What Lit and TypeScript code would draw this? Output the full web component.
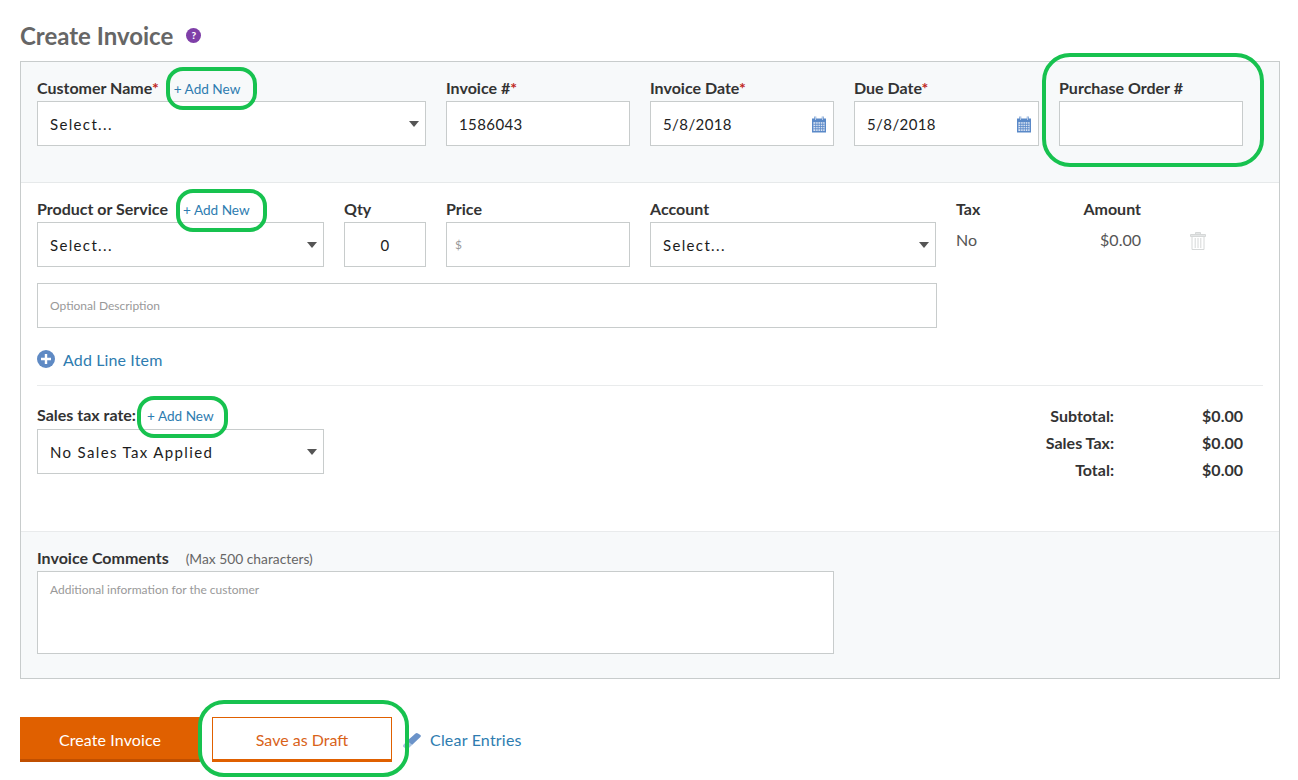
import { customElement } from 'lit/decorators.js';
import { css, html, LitElement, nothing } from 'lit';

const caret = html`<span class="caret"></span>`;

const calendar = html`<svg class="cal" viewBox="0 0 15 18" width="14" height="18">
  <path fill="#5a89c8" d="M0 3h2.5V1h2v2h6V1h2v2H15v15H0z" />
  <path fill="#fff" d="M3.3 .6h.8v4h-.8zM11 .6h.8v4H11z" opacity=".75" />
  <path fill="#dbe5f3" d="M1.5 7h12v9.5h-12z" />
  <path stroke="#5a89c8" stroke-width=".9" d="M1.5 9.3h12M1.5 11.7h12M1.5 14.1h12M4 7v9.5M6.5 7v9.5M9 7v9.5M11.5 7v9.5" />
</svg>`;

const trash = html`<svg viewBox="0 0 16 18" width="16" height="18" fill="none" stroke="#d6d8d8" stroke-width="1">
  <path d="M5.5 2.5v-2h5v2M.5 2.5h15v2H.5z" fill="#e4e6e6" />
  <path d="M2 4.5v13h12v-13M5.2 6v10M8 6v10M10.8 6v10" />
</svg>`;

const eraser = html`<svg viewBox="0 0 20 18" width="20" height="18">
  <path fill="#6b93c9" d="M5 10 13.5 2.5c.8-.7 1.8-.7 2.5 0l2.4 1.6c.6.6.6 1.4 0 2L10 14z" />
  <path fill="#a9c1e0" d="M1 14.2 5 10l5 4-3.6 3.4H3.6L1 15.4z" />
</svg>`;

// green review marks drawn on top of the screenshot
const marks = [
  { left: 166, top: 67, width: 91, height: 43, radius: 17 },
  { left: 1042, top: 53, width: 222, height: 114, radius: 28 },
  { left: 176, top: 189, width: 91, height: 43, radius: 17 },
  { left: 137, top: 396, width: 91, height: 42, radius: 17 },
  { left: 198, top: 700, width: 211, height: 77, radius: 26 },
];

@customElement('app-root')
export class AppRoot extends LitElement {
  static override styles = css`
    :host {
      display: block;
      position: relative;
      height: 780px;
      padding: 0 18px 0 20px;
      box-sizing: border-box;
      font-family: Lato, 'Liberation Sans', sans-serif;
      color: #333;
      background: #fff;
      overflow: hidden;
    }

    * {
      box-sizing: border-box;
    }

    .title {
      display: flex;
      align-items: center;
      gap: 13px;
      height: 61px;
      padding-top: 9px;
      margin: 0;
      font-size: 24px;
      font-weight: 700;
      color: #666;
    }

    .help {
      width: 15px;
      height: 15px;
      border-radius: 50%;
      background: #7f3fa8;
      color: #fff;
      font-size: 10px;
      font-weight: 900;
      line-height: 15px;
      text-align: center;
    }

    .panel {
      width: 1260px;
      height: 618px;
      border: 1px solid #c8cccc;
    }

    .head {
      display: grid;
      grid-template-columns: 389px 184px 184px 185px 184px;
      column-gap: 20px;
      height: 121px;
      padding: 16px 16px 0;
      background: #f7f9fa;
      border-bottom: 1px solid #e6e9ea;
    }

    label,
    .label {
      display: block;
      height: 23px;
      font-size: 16px;
      font-weight: 700;
      line-height: 20px;
      white-space: nowrap;
    }

    .req {
      color: #c0281c;
    }

    .add {
      margin-left: 15px;
      font-size: 13.6px;
      font-weight: 400;
      color: #2e7cb0;
    }

    .tax-box .add {
      margin-left: 11px;
    }

    .box {
      position: relative;
      display: flex;
      align-items: center;
      height: 45px;
      padding: 0 12px;
      background: #fff;
      border: 1px solid #c8cccc;
      font-size: 15px;
      color: #222;
      letter-spacing: 0.4px;
    }

    .select {
      letter-spacing: 1.35px;
      color: #1c1c1c;
    }

    .caret {
      position: absolute;
      right: 6px;
      top: 19px;
      width: 0;
      height: 0;
      border-left: 5.5px solid transparent;
      border-right: 5.5px solid transparent;
      border-top: 6px solid #555;
    }

    .cal {
      position: absolute;
      right: 7px;
      top: 13px;
    }

    .lines {
      height: 348px;
      padding: 16px 16px 0;
    }

    .row {
      display: grid;
      grid-template-columns: 287px 82px 184px 286px 100px 65px 1fr;
      column-gap: 20px;
    }

    .center {
      justify-content: center;
      padding: 0;
    }

    .price {
      padding-left: 8px;
    }

    .hint {
      font-size: 12px;
      color: #999;
      letter-spacing: 0;
    }

    .plain {
      padding-top: 8px;
      font-size: 16px;
      color: #555;
    }

    .right {
      text-align: right;
    }

    .trash {
      padding: 33px 0 0 29px;
    }

    .desc {
      width: 900px;
      margin-top: 16px;
    }

    .add-line {
      display: flex;
      align-items: center;
      gap: 8px;
      height: 58px;
      padding-top: 5px;
      font-size: 16px;
      color: #2e7cb0;
      letter-spacing: 0.13px;
      border-bottom: 1px solid #e9ebec;
    }

    .plus {
      width: 18px;
      height: 18px;
    }

    .tax {
      display: flex;
      justify-content: space-between;
      padding-top: 19px;
    }

    .tax-box {
      width: 287px;
    }

    .tax-box label {
      height: 24px;
    }

    .totals {
      display: grid;
      grid-template-columns: 106px 129px;
      grid-auto-rows: 27px;
      margin-right: 20px;
      font-size: 16px;
      font-weight: 700;
      line-height: 21px;
      text-align: right;
    }

    .comments {
      height: 147px;
      padding: 16px 16px 0;
      background: #f7f9fa;
      border-top: 1px solid #e9ebec;
    }

    .note {
      margin-left: 13px;
      font-size: 13.8px;
      font-weight: 400;
      color: #666;
    }

    .textarea {
      align-items: flex-start;
      width: 797px;
      height: 83px;
      padding-top: 10px;
    }

    .actions {
      display: flex;
      align-items: center;
      margin-top: 38px;
    }

    .btn {
      display: flex;
      align-items: center;
      justify-content: center;
      width: 180px;
      height: 45px;
      padding-top: 3px;
      font-size: 16px;
    }

    .primary {
      background: #e06000;
      border-bottom: 3px solid #c04f00;
      color: #fff;
      letter-spacing: 0.1px;
    }

    .draft {
      margin-left: 12px;
      padding-top: 1px;
      background: #fff;
      border: 1px solid #e06000;
      border-bottom-width: 3px;
      color: #d9631a;
    }

    .clear {
      display: flex;
      align-items: center;
      gap: 8px;
      margin-left: 10px;
      font-size: 16px;
      letter-spacing: 0.2px;
      color: #2e7cb0;
    }

    .mark {
      position: absolute;
      border: 4px solid #17c24f;
    }
  `;

  private renderLabel(text: string, required = false, addNew = false) {
    return html`<label
      >${text}${required ? html`<span class="req">*</span>` : nothing}${addNew
        ? html`<span class="add">+ Add New</span>`
        : nothing}</label
    >`;
  }

  private renderDate(text: string) {
    return html`<div>
      ${this.renderLabel(text, true)}
      <div class="box">5/8/2018${calendar}</div>
    </div>`;
  }

  override render() {
    return html`
      <h1 class="title">Create Invoice <span class="help">?</span></h1>
      <div class="panel">
        <div class="head">
          <div>
            ${this.renderLabel('Customer Name', true, true)}
            <div class="box select">Select...${caret}</div>
          </div>
          <div>
            ${this.renderLabel('Invoice #', true)}
            <div class="box">1586043</div>
          </div>
          ${this.renderDate('Invoice Date')} ${this.renderDate('Due Date')}
          <div>
            ${this.renderLabel('Purchase Order #')}
            <div class="box"></div>
          </div>
        </div>
        <div class="lines">
          <div class="row">
            <div>
              ${this.renderLabel('Product or Service', false, true)}
              <div class="box select">Select...${caret}</div>
            </div>
            <div>
              ${this.renderLabel('Qty')}
              <div class="box center">0</div>
            </div>
            <div>
              ${this.renderLabel('Price')}
              <div class="box price"><span class="hint">$</span></div>
            </div>
            <div>
              ${this.renderLabel('Account')}
              <div class="box select">Select...${caret}</div>
            </div>
            <div>
              ${this.renderLabel('Tax')}
              <div class="plain">No</div>
            </div>
            <div class="right">
              ${this.renderLabel('Amount')}
              <div class="plain">$0.00</div>
            </div>
            <div class="trash">${trash}</div>
          </div>
          <div class="box desc"><span class="hint">Optional Description</span></div>
          <div class="add-line">
            <svg class="plus" viewBox="0 0 18 18">
              <circle cx="9" cy="9" r="9" fill="#5f8ac4" />
              <path d="M9 4v10M4 9h10" stroke="#fff" stroke-width="2.4" />
            </svg>
            Add Line Item
          </div>
          <div class="tax">
            <div class="tax-box">
              ${this.renderLabel('Sales tax rate:', false, true)}
              <div class="box select">No Sales Tax Applied${caret}</div>
            </div>
            <div class="totals">
              <span>Subtotal:</span><span>$0.00</span>
              <span>Sales Tax:</span><span>$0.00</span>
              <span>Total:</span><span>$0.00</span>
            </div>
          </div>
        </div>
        <div class="comments">
          <div class="label">Invoice Comments <span class="note">(Max 500 characters)</span></div>
          <div class="box textarea">
            <span class="hint">Additional information for the customer</span>
          </div>
        </div>
      </div>
      <div class="actions">
        <div class="btn primary">Create Invoice</div>
        <div class="btn draft">Save as Draft</div>
        <div class="clear">${eraser} Clear Entries</div>
      </div>
      ${marks.map(
        (m) => html`<div
          class="mark"
          style="left:${m.left}px;top:${m.top}px;width:${m.width}px;height:${m.height}px;border-radius:${m.radius}px"
        ></div>`
      )}
    `;
  }
}
